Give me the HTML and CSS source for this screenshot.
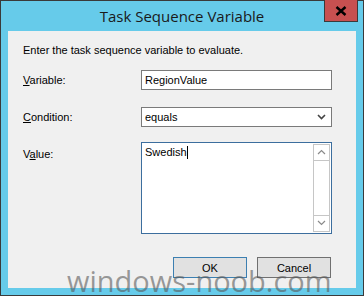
FILE: index.html
```html
<!DOCTYPE html>
<html>
<head>
<meta charset="utf-8">
<link rel="stylesheet" href="styles.css">
</head>
<body>
<div class="window">
  <div class="titlebar"><span class="title">Task Sequence Variable</span></div>
  <div class="close"><svg width="12" height="10" viewBox="0 0 12 10"><path d="M1.5 1 L10.5 9 M10.5 1 L1.5 9" stroke="#000" stroke-width="2.4" fill="none"/></svg></div>
  <div class="client">
    <p class="intro">Enter the task sequence variable to evaluate.</p>
    <div class="form">
      <label class="lbl"><u>V</u>ariable:</label>
      <div class="field input">RegionValue</div>
      <label class="lbl"><u>C</u>ondition:</label>
      <div class="field select"><span>equals</span><svg width="9" height="6" viewBox="0 0 9 6"><path d="M1 1 L4.5 4.5 L8 1" stroke="#444" stroke-width="1.6" fill="none"/></svg></div>
      <label class="lbl lbl-top">V<u>a</u>lue:</label>
      <div class="field textarea">
        <div class="ta-text">Swedish<span class="caret"></span></div>
        <div class="scrollbar">
          <div class="sb-btn"><svg width="9" height="6" viewBox="0 0 9 6"><path d="M1 5 L4.5 1.5 L8 5" stroke="#8a8a8a" stroke-width="1.2" fill="none"/></svg></div>
          <div class="sb-track"></div>
          <div class="sb-btn"><svg width="9" height="6" viewBox="0 0 9 6"><path d="M1 1 L4.5 4.5 L8 1" stroke="#8a8a8a" stroke-width="1.2" fill="none"/></svg></div>
        </div>
      </div>
    </div>
    <div class="buttons">
      <button class="btn default">OK</button>
      <button class="btn">Cancel</button>
    </div>
  </div>
  <div class="watermark">windows-noob.com</div>
</div>
</body>
</html>
```
FILE: styles.css
```css
* { box-sizing: border-box; }
html, body { margin: 0; padding: 0; }
body { width: 364px; height: 296px; overflow: hidden; background: #66cbea; }
.window {
  position: relative;
  width: 364px; height: 296px;
  border: 1px solid #3a3a3a;
  background: #66cbea;
  display: flex; flex-direction: column;
  padding: 0 7px 7px 7px;
}
.titlebar {
  height: 30px;
  display: flex; align-items: center; justify-content: center;
}
.title {
  font-family: "Open Sans", "Noto Sans", sans-serif;
  font-size: 15px;
  color: #1a1a1a;
}
.close {
  position: absolute;
  top: -1px; right: 5px;
  width: 34px; height: 22px;
  background: #c75050;
  border: 1px solid #3a3a3a;
  border-top: none;
  display: flex; align-items: center; justify-content: center;
}
.client {
  flex: 1;
  background: #f0f0f0;
  padding: 13px 24px 0 15px;
  font-family: "Liberation Sans", Arial, sans-serif;
  font-size: 11px;
  line-height: 13px;
  color: #000;
}
.intro { margin: 0 0 13px 0; }
.form {
  display: grid;
  grid-template-columns: 118px 191px;
  grid-template-rows: 20px 20px 91px;
  row-gap: 17px;
  align-items: center;
}
.form .lbl-top { align-self: start; padding-top: 4px; }
.form .textarea { margin-top: -4px; }
.field {
  background: #fff;
  border: 1px solid #7a7a7a;
  height: 20px;
  padding: 0 3px;
  display: flex; align-items: center;
}
.select { justify-content: space-between; padding-right: 5px; }
.textarea {
  height: 92px;
  border-color: #3c6e9e;
  align-items: stretch;
  padding: 1px 1px 1px 3px;
}
.ta-text { flex: 1; padding-top: 2px; }
.caret { display: inline-block; width: 1px; height: 13px; background: #000; vertical-align: top; }
.scrollbar {
  width: 17px;
  display: flex; flex-direction: column;
  border: 1px solid #c6c6c6;
}
.sb-btn { height: 16px; display: flex; align-items: center; justify-content: center; }
.sb-btn:first-child { border-bottom: 1px solid #c6c6c6; }
.sb-btn:last-child { border-top: 1px solid #c6c6c6; }
.sb-track { flex: 1; }
.buttons {
  display: flex; justify-content: flex-end; gap: 10px;
  margin-top: 22px;
  padding-right: 1px;
}
.btn {
  width: 74px; height: 21px;
  background: #e1e1e1;
  border: 1px solid #707070;
  font-family: "Liberation Sans", Arial, sans-serif;
  font-size: 11px;
  color: #000;
  padding: 0;
}
.btn.default { border-color: #3c7fb1; }
.watermark {
  position: absolute;
  left: 66px; top: 268px;
  font-family: "Open Sans", sans-serif;
  font-size: 29px;
  color: rgba(90, 90, 90, 0.6);
  line-height: 24px;
}
```
